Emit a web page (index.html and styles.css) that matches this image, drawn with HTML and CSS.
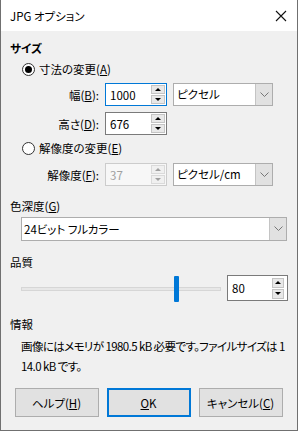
FILE: index.html
```html
<!DOCTYPE html>
<html lang="ja">
<head>
    <meta charset="UTF-8">
    <title>JPG オプション</title>
    <link rel="stylesheet" href="styles.css">
</head>
<body>

    <div class="dialog">
        <div class="titlebar">
            <span class="title">JPG オプション</span>
            <svg class="close" width="12" height="12" viewBox="0 0 12 12">
                <path d="M1 1 L11 11 M11 1 L1 11" stroke="#111" stroke-width="1.1" fill="none"/>
            </svg>
        </div>

        <div class="content">
            <div class="heading heading-size">サイズ</div>

            <div class="radio-row radio-first">
                <span class="radio checked"></span>
                <span>寸法の変更(<u>A</u>)</span>
            </div>

            <div class="field-row row-width">
                <span class="field-label">幅(<u>B</u>):</span>
                <div class="spin focused">
                    <span class="spin-value">1000</span>
                    <span class="spin-btns">
                        <span class="spin-btn"><i class="up"></i></span>
                        <span class="spin-btn"><i class="down"></i></span>
                    </span>
                </div>
                <div class="combo combo-unit">
                    <span class="combo-value">ピクセル</span>
                    <span class="combo-btn">
                        <svg width="9" height="6" viewBox="0 0 9 6"><path d="M0.5 0.5 L4.5 4.5 L8.5 0.5" stroke="#777" fill="none"/></svg>
                    </span>
                </div>
            </div>

            <div class="field-row row-height">
                <span class="field-label">高さ(<u>D</u>):</span>
                <div class="spin">
                    <span class="spin-value">676</span>
                    <span class="spin-btns">
                        <span class="spin-btn"><i class="up"></i></span>
                        <span class="spin-btn"><i class="down"></i></span>
                    </span>
                </div>
            </div>

            <div class="radio-row radio-second">
                <span class="radio"></span>
                <span>解像度の変更(<u>E</u>)</span>
            </div>

            <div class="field-row row-res">
                <span class="field-label">解像度(<u>F</u>):</span>
                <div class="spin disabled">
                    <span class="spin-value">37</span>
                    <span class="spin-btns">
                        <span class="spin-btn"><i class="up"></i></span>
                        <span class="spin-btn"><i class="down"></i></span>
                    </span>
                </div>
                <div class="combo combo-unit">
                    <span class="combo-value">ピクセル/cm</span>
                    <span class="combo-btn">
                        <svg width="9" height="6" viewBox="0 0 9 6"><path d="M0.5 0.5 L4.5 4.5 L8.5 0.5" stroke="#777" fill="none"/></svg>
                    </span>
                </div>
            </div>

            <div class="heading heading-depth">色深度(<u>G</u>)</div>
            <div class="combo combo-depth">
                <span class="combo-value">24ビット フルカラー</span>
                <span class="combo-btn">
                    <svg width="9" height="6" viewBox="0 0 9 6"><path d="M0.5 0.5 L4.5 4.5 L8.5 0.5" stroke="#777" fill="none"/></svg>
                </span>
            </div>

            <div class="heading heading-quality">品質</div>
            <div class="slider-row">
                <div class="slider">
                    <div class="track"></div>
                    <div class="thumb" style="left: 153px"></div>
                </div>
                <div class="spin spin-quality">
                    <span class="spin-value">80</span>
                    <span class="spin-btns">
                        <span class="spin-btn"><i class="up"></i></span>
                        <span class="spin-btn"><i class="down"></i></span>
                    </span>
                </div>
            </div>

            <div class="heading heading-info">情報</div>
            <p class="info">画像にはメモリが 1980.5 kB 必要です。ファイルサイズは 1<br>14.0 kB です。</p>

            <div class="buttons">
                <button class="btn">ヘルプ(<u>H</u>)</button>
                <button class="btn default"><u>O</u>K</button>
                <button class="btn">キャンセル(<u>C</u>)</button>
            </div>
        </div>
    </div>

</body>
</html>
```

FILE: styles.css
```css
* {
    box-sizing: border-box;
}
body {
    margin: 0;
    font-family: "Noto Sans CJK JP", sans-serif;
    font-size: 11.5px;
    font-feature-settings: "palt";
    color: #000;
    background: #f0f0f0;
}
.dialog {
    width: 298px;
    height: 431px;
    background: #f0f0f0;
    border: 1px solid #707070;
    border-top: none;
    display: flex;
    flex-direction: column;
    overflow: hidden;
}
.titlebar {
    height: 31px;
    background: #fff;
    display: flex;
    align-items: center;
    justify-content: space-between;
    padding: 0 9px 0 9px;
    flex-shrink: 0;
}
.close {
    margin-right: 1px;
}
.content {
    padding: 0 9px;
    display: flex;
    flex-direction: column;
}
.heading {
    line-height: 16px;
    height: 16px;
}
.heading-size {
    margin-top: 9px;
    font-weight: bold;
}
.radio-row {
    display: flex;
    align-items: center;
    height: 16px;
    line-height: 16px;
    margin-left: 12px;
    gap: 4px;
}
.radio-first {
    margin-top: 5px;
}
.radio-second {
    margin-top: 5px;
}
.radio {
    width: 13px;
    height: 13px;
    border: 1px solid #333;
    border-radius: 50%;
    background: #fff;
    display: flex;
    align-items: center;
    justify-content: center;
}
.radio.checked::after {
    content: "";
    width: 7px;
    height: 7px;
    border-radius: 50%;
    background: #000;
}
.field-row {
    display: flex;
    align-items: center;
    height: 23px;
}
.row-width {
    margin-top: 6px;
}
.row-height {
    margin-top: 6px;
}
.row-res {
    margin-top: 7px;
}
.field-label {
    width: 95px;
    text-align: right;
    padding-right: 6px;
}
.spin {
    width: 62px;
    height: 23px;
    border: 1px solid #7a7a7a;
    background: #fff;
    display: flex;
    align-items: center;
    justify-content: space-between;
    padding: 1px 1px 1px 4px;
}
.spin.focused {
    border-color: #0078d7;
}
.spin.disabled {
    border-color: #cccccc;
    background: #f7f7f7;
    color: #a0a0a0;
}
.spin-value {
    line-height: 16px;
}
.spin-btns {
    display: flex;
    flex-direction: column;
    gap: 1px;
    height: 19px;
    width: 14px;
}
.spin-btn {
    flex: 1;
    background: #e8e8e8;
    border: 1px solid #c4c4c4;
    display: flex;
    align-items: center;
    justify-content: center;
}
.spin-btn i {
    width: 0;
    height: 0;
    border-left: 3px solid transparent;
    border-right: 3px solid transparent;
}
.spin-btn i.up {
    border-bottom: 3px solid #000;
}
.spin-btn i.down {
    border-top: 3px solid #000;
}
.spin.disabled .spin-btn {
    background: #f0f0f0;
    border-color: #dadada;
}
.spin.disabled .spin-btn i.up {
    border-bottom-color: #a0a0a0;
}
.spin.disabled .spin-btn i.down {
    border-top-color: #a0a0a0;
}
.combo {
    height: 23px;
    border: 1px solid #adadad;
    background: #fff;
    display: flex;
    align-items: stretch;
    justify-content: space-between;
}
.combo-unit {
    width: 100px;
    margin-left: 6px;
}
.combo-value {
    padding-left: 3px;
    line-height: 20px;
    white-space: nowrap;
}
.combo-btn {
    width: 17px;
    flex-shrink: 0;
    background: #e1e1e1;
    border-left: 1px solid #c4c4c4;
    display: flex;
    align-items: center;
    justify-content: center;
}
.heading-depth {
    margin-top: 12px;
}
.combo-depth {
    height: 24px;
    margin: 3px 1px 0 11px;
}
.combo-depth .combo-value {
    line-height: 22px;
    padding-left: 2px;
}
.heading-quality {
    margin-top: 13px;
}
.slider-row {
    display: flex;
    align-items: center;
    margin: 5px 0 0 11px;
    height: 26px;
}
.slider {
    position: relative;
    width: 200px;
    height: 26px;
    display: flex;
    align-items: center;
}
.track {
    width: 100%;
    height: 4px;
    background: #e7e7e7;
    border: 1px solid #d6d6d6;
    margin-top: 1px;
}
.thumb {
    position: absolute;
    top: 1px;
    width: 5px;
    height: 26px;
    background: #0078d7;
    border-radius: 1px;
}
.spin-quality {
    width: 61px;
    height: 26px;
    margin-left: 6px;
    padding: 2px 3px 2px 4px;
}
.spin-quality .spin-btns {
    height: 21px;
    width: 12px;
}
.heading-info {
    margin-top: 15px;
}
.info {
    margin: 4px 0 0 11px;
    line-height: 20px;
    white-space: nowrap;
    letter-spacing: -0.6px;
}
.buttons {
    display: flex;
    justify-content: center;
    gap: 8px;
    margin-top: 12px;
    padding-right: 1px;
}
.btn {
    width: 84px;
    height: 29px;
    font-family: inherit;
    font-size: 11.5px;
    font-feature-settings: "palt";
    background: #e1e1e1;
    border: 1px solid #adadad;
    color: #000;
    padding: 0;
}
.btn.default {
    border-color: #0078d7;
    box-shadow: inset 0 0 0 1px #0078d7;
}
```
